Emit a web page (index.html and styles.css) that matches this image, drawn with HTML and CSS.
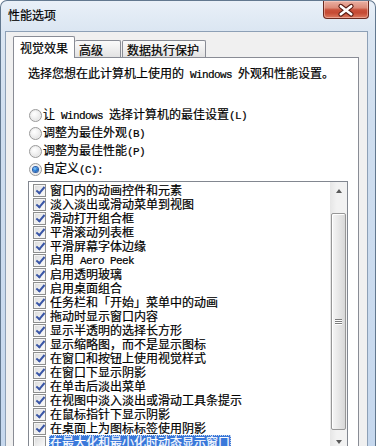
FILE: index.html
```html
<!DOCTYPE html>
<html lang="zh-CN">
<head>
<meta charset="utf-8">
<title>性能选项</title>
<link rel="stylesheet" href="styles.css">
</head>
<body>
<div class="window">
  <div class="titlebar">
    <span class="title">性能选项</span>
    <div class="close">
      <svg width="46" height="18" viewBox="0 0 46 18">
        <path d="M17.5 5 L28.5 13.5 M28.5 5 L17.5 13.5" stroke="#5a1d14" stroke-width="5" stroke-linecap="round" fill="none"/>
        <path d="M17.5 5 L28.5 13.5 M28.5 5 L17.5 13.5" stroke="#ffffff" stroke-width="2.6" stroke-linecap="round" fill="none"/>
      </svg>
    </div>
  </div>
  <div class="client">
    <div class="tabs">
      <div class="tab tab-active">视觉效果</div>
      <div class="tab tab-adv">高级</div>
      <div class="tab tab-dep">数据执行保护</div>
    </div>
    <div class="panel">
      <p class="intro">选择您想在此计算机上使用的<span class="en"> Windows </span>外观和性能设置。</p>
      <div class="radios">
        <div class="radio-row"><span class="radio"></span><span class="label">让<span class="en"> Windows </span>选择计算机的最佳设置<span class="en">(L)</span></span></div>
        <div class="radio-row"><span class="radio"></span><span class="label">调整为最佳外观<span class="en">(B)</span></span></div>
        <div class="radio-row"><span class="radio"></span><span class="label">调整为最佳性能<span class="en">(P)</span></span></div>
        <div class="radio-row"><span class="radio radio-on"></span><span class="label">自定义<span class="en">(C):</span></span></div>
      </div>
      <div class="listbox">
        <div class="items">
          <div class="item"><span class="cb on"></span><span class="text">窗口内的动画控件和元素</span></div>
          <div class="item"><span class="cb on"></span><span class="text">淡入淡出或滑动菜单到视图</span></div>
          <div class="item"><span class="cb on"></span><span class="text">滑动打开组合框</span></div>
          <div class="item"><span class="cb on"></span><span class="text">平滑滚动列表框</span></div>
          <div class="item"><span class="cb on"></span><span class="text">平滑屏幕字体边缘</span></div>
          <div class="item"><span class="cb on"></span><span class="text">启用<span class="en"> Aero Peek</span></span></div>
          <div class="item"><span class="cb on"></span><span class="text">启用透明玻璃</span></div>
          <div class="item"><span class="cb on"></span><span class="text">启用桌面组合</span></div>
          <div class="item"><span class="cb on"></span><span class="text">任务栏和「开始」菜单中的动画</span></div>
          <div class="item"><span class="cb on"></span><span class="text">拖动时显示窗口内容</span></div>
          <div class="item"><span class="cb on"></span><span class="text">显示半透明的选择长方形</span></div>
          <div class="item"><span class="cb on"></span><span class="text">显示缩略图，而不是显示图标</span></div>
          <div class="item"><span class="cb on"></span><span class="text">在窗口和按钮上使用视觉样式</span></div>
          <div class="item"><span class="cb on"></span><span class="text">在窗口下显示阴影</span></div>
          <div class="item"><span class="cb on"></span><span class="text">在单击后淡出菜单</span></div>
          <div class="item"><span class="cb on"></span><span class="text">在视图中淡入淡出或滑动工具条提示</span></div>
          <div class="item"><span class="cb on"></span><span class="text">在鼠标指针下显示阴影</span></div>
          <div class="item"><span class="cb on"></span><span class="text">在桌面上为图标标签使用阴影</span></div>
          <div class="item"><span class="cb"></span><span class="text selected">在最大化和最小化时动态显示窗口</span></div>
        </div>
        <div class="scrollbar">
          <div class="sb-btn"><span class="arrow-up"></span></div>
          <div class="thumb"><span class="grip"></span></div>
          <div class="sb-btn sb-down"><span class="arrow-down"></span></div>
        </div>
      </div>
    </div>
  </div>
</div>
</body>
</html>
```

FILE: styles.css
```css
html, body {
  margin: 0;
  padding: 0;
  background: #ffffff;
}

.window {
  width: 376px;
  height: 446px;
  box-sizing: border-box;
  border: 1px solid #62788f;
  border-bottom: none;
  border-radius: 7px 7px 0 0;
  background: linear-gradient(to bottom, #e9f0f8 0px, #dbe6f2 30px, #cfdeef 120px, #c6d8ee 446px);
  overflow: hidden;
  display: flex;
  flex-direction: column;
  font-family: "Noto Sans CJK SC", "Noto Sans", sans-serif;
  font-size: 12px;
  color: #000;
  -webkit-text-stroke: 0.2px currentColor;
}

.en {
  font-family: "Liberation Mono", "DejaVu Sans Mono", monospace;
  font-size: 11px;
  letter-spacing: -0.6px;
  white-space: pre;
}

.titlebar {
  height: 30px;
  flex: none;
  display: flex;
  justify-content: space-between;
  align-items: flex-start;
}

.title {
  margin: 7px 0 0 7px;
  line-height: 14px;
}

.close {
  width: 46px;
  height: 18px;
  margin-right: 6px;
  box-sizing: border-box;
  border: 1px solid #6a2a20;
  border-top: none;
  border-radius: 0 0 4px 4px;
  background: linear-gradient(to bottom, #eab1a4 0%, #dc8b79 40%, #c9513b 52%, #c54a33 70%, #dc7a60 100%);
  box-shadow: inset 0 0 0 1px rgba(255, 220, 210, 0.45);
  display: flex;
  align-items: center;
  justify-content: center;
}

.close svg {
  display: block;
}

.client {
  flex: 1;
  margin: 0 7px 0 4px;
  border: 1px solid #8da0b6;
  border-bottom: none;
  background: #f0f0f0;
  display: flex;
  flex-direction: column;
}

.tabs {
  flex: none;
  display: flex;
  align-items: flex-end;
  padding: 4px 0 0 7px;
}

.tab {
  box-sizing: border-box;
  border: 1px solid #898c95;
  border-bottom: none;
  border-radius: 2px 2px 0 0;
  line-height: 14px;
  white-space: nowrap;
}

.tab-active {
  height: 22px;
  width: 62px;
  padding: 4px 0 0 6px;
  margin-bottom: -1px;
  background: #ffffff;
  position: relative;
  z-index: 2;
}

.tab-adv {
  height: 17px;
  width: 46px;
  padding: 2px 0 0 4px;
  margin-left: 0;
  border-left: none;
  background: linear-gradient(to bottom, #fafafa 0%, #efefef 50%, #e2e2e2 100%);
}

.tab-dep {
  height: 17px;
  width: 84px;
  padding: 2px 0 0 4px;
  margin-left: 1px;
  background: linear-gradient(to bottom, #fafafa 0%, #efefef 50%, #e2e2e2 100%);
}

.panel {
  flex: 1;
  margin: 0 8px 0 7px;
  border: 1px solid #898c95;
  border-bottom: none;
  background: #ffffff;
  padding: 8px 0 0 14px;
}

.intro {
  margin: 0;
  line-height: 14px;
  white-space: nowrap;
}

.radios {
  margin-top: 24px;
  display: flex;
  flex-direction: column;
}

.radio-row {
  height: 18px;
  display: flex;
  align-items: center;
  white-space: nowrap;
}

.radio {
  width: 13px;
  height: 13px;
  box-sizing: border-box;
  margin-left: 1px;
  margin-right: 1px;
  border-radius: 50%;
  border: 1px solid #9a9a9a;
  background: radial-gradient(circle at 40% 35%, #ffffff 0%, #f2f2f2 40%, #d6d6d6 100%);
  box-shadow: inset 0 0 0 1px #ececec;
  display: flex;
  align-items: center;
  justify-content: center;
}

.radio-on::after {
  content: "";
  width: 5px;
  height: 5px;
  border-radius: 50%;
  background: radial-gradient(circle at 40% 35%, #8fd0ff 0%, #2a7fd6 45%, #0c3f8c 100%);
  box-shadow: 0 0 0 1px #2c5da6;
}

.label {
  line-height: 14px;
}

.listbox {
  margin-top: 3px;
  width: 320px;
  height: 300px;
  box-sizing: border-box;
  border: 1px solid #828790;
  background: #ffffff;
  display: flex;
}

.items {
  flex: 1;
  padding-top: 1px;
  display: flex;
  flex-direction: column;
}

.item {
  height: 14px;
  display: flex;
  align-items: center;
  white-space: nowrap;
}

.cb {
  flex: none;
  width: 13px;
  height: 13px;
  box-sizing: border-box;
  margin-left: 4px;
  border: 1px solid #8e8f8f;
  background: linear-gradient(135deg, #d9d9d9 0%, #ececec 50%, #fdfdfd 100%);
  box-shadow: inset 0 0 0 1px #f4f4f4;
  position: relative;
}

.cb.on::after {
  content: "";
  position: absolute;
  left: 3.5px;
  top: 0.5px;
  width: 3px;
  height: 7px;
  border-right: 2px solid #3a56a6;
  border-bottom: 2px solid #3a56a6;
  transform: rotate(40deg);
}

.text {
  margin-left: 4px;
  line-height: 14px;
}

.text.selected {
  margin-left: 3px;
  padding: 0 1px;
  background: #3a78da;
  color: #ffffff;
  outline: 1px dotted #c8d8f0;
  outline-offset: -1px;
}

.scrollbar {
  flex: none;
  width: 17px;
  background: linear-gradient(to right, #e6e6e6 0%, #f2f2f2 40%, #f2f2f2 100%);
  display: flex;
  flex-direction: column;
}

.sb-btn {
  height: 17px;
  flex: none;
  display: flex;
  align-items: center;
  justify-content: center;
}

.sb-down {
  margin-top: 3px;
}

.arrow-up {
  width: 0;
  height: 0;
  border-left: 3.5px solid transparent;
  border-right: 3.5px solid transparent;
  border-bottom: 4px solid #5a5a5a;
}

.arrow-down {
  width: 0;
  height: 0;
  border-left: 3.5px solid transparent;
  border-right: 3.5px solid transparent;
  border-top: 4px solid #5a5a5a;
}

.thumb {
  flex: none;
  margin: 14px 1px 0 1px;
  height: 217px;
  box-sizing: border-box;
  border: 1px solid #979797;
  border-radius: 2px;
  background: linear-gradient(to right, #f6f6f6 0%, #e9e9e9 45%, #d8d8d8 100%);
  box-shadow: inset 1px 1px 0 #ffffff;
  display: flex;
  align-items: center;
  justify-content: center;
}

.grip {
  width: 7px;
  height: 1px;
  background: #7c7c7c;
  box-shadow: 0 -2px 0 #7c7c7c, 0 2px 0 #7c7c7c, 0 1px 0 #ffffff, 0 -1px 0 #ffffff, 0 3px 0 #ffffff;
}
```
